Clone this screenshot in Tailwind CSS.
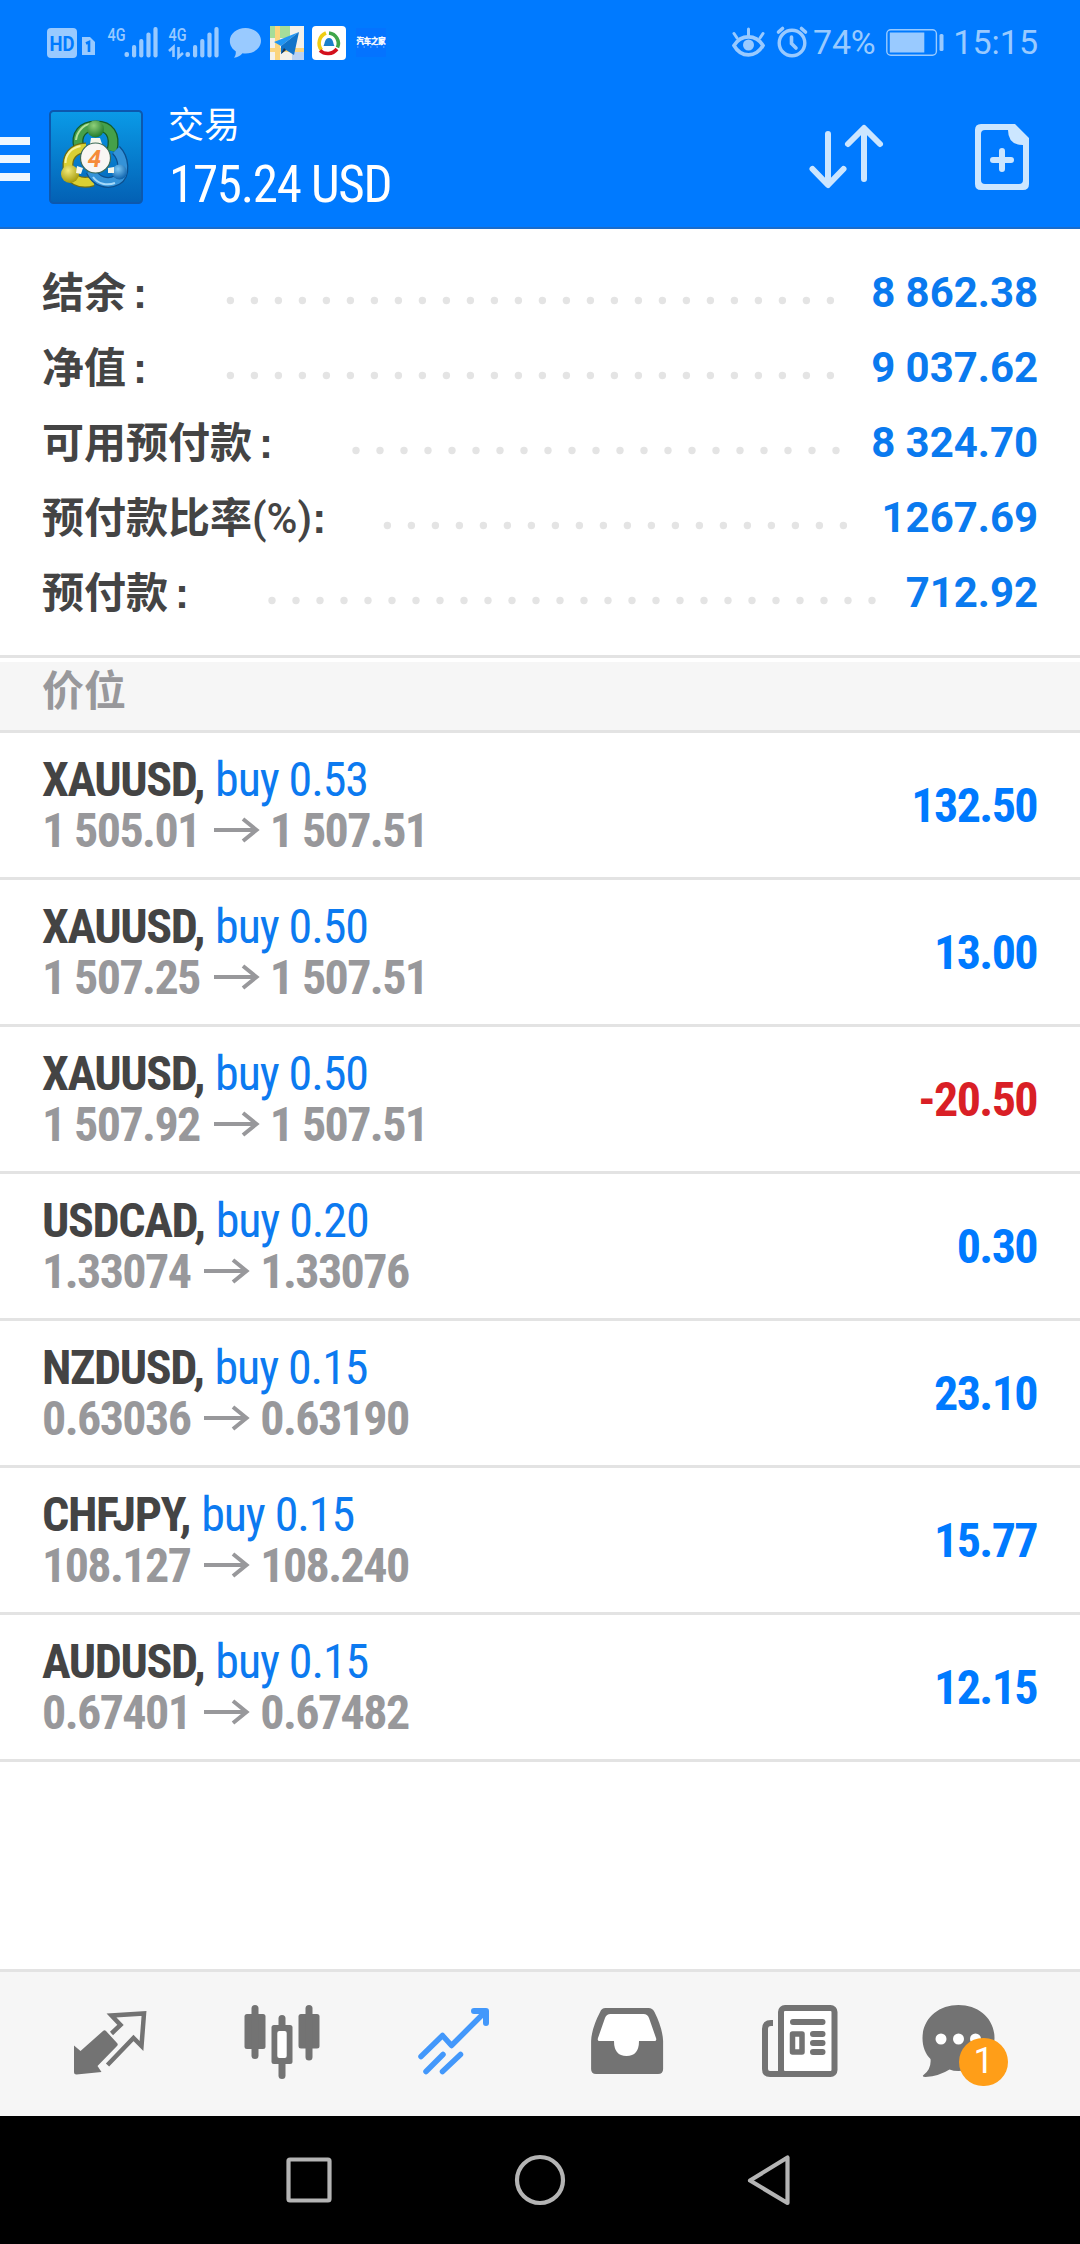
<!DOCTYPE html>
<html lang="zh-CN">
<head>
<meta charset="utf-8">
<title>交易</title>
<script src="https://cdn.jsdelivr.net/npm/@tailwindcss/browser@4"></script>
</head>
<body class="w-[1080px] h-[2244px] flex flex-col overflow-hidden bg-white font-['Roboto','Noto_Sans_CJK_SC',sans-serif] text-[#444]">

<header class="h-[229px] shrink-0 bg-[#007aff] border-b-2 border-[#1a6ccb] flex flex-col">
  <!-- status bar -->
  <div class="h-[84px] flex items-start justify-between text-[#99caff]">
    <svg class="w-[400px] h-[84px]" viewBox="0 0 400 84" fill="currentColor">
      <rect x="47" y="28" width="30" height="30" rx="4"/>
      <text x="62" y="51" text-anchor="middle" textLength="25" lengthAdjust="spacingAndGlyphs" class="font-['Roboto'] font-bold text-[20px] fill-[#007aff]">HD</text>
      <path d="M82 37h8l5 5v13H82z"/>
      <path d="M86 43.5l3-1.5v10" fill="none" stroke="#007aff" stroke-width="2.6"/>
      <text x="107.500" y="41" textLength="18" lengthAdjust="spacingAndGlyphs" class="font-['Roboto'] font-medium text-[19px]">4G</text>
      <g id="bars">
        <rect x="124.500" y="52" width="4.500" height="5" rx="2"/>
        <rect x="132" y="45" width="4.200" height="12.500" rx="2"/>
        <rect x="139.200" y="39" width="4.200" height="18.500" rx="2"/>
        <rect x="146.400" y="32.500" width="4.200" height="25" rx="2"/>
        <rect x="153.400" y="27" width="4.200" height="30.500" rx="2"/>
      </g>
      <text x="168.500" y="41" textLength="18" lengthAdjust="spacingAndGlyphs" class="font-['Roboto'] font-medium text-[19px]">4G</text>
      <use href="#bars" x="61"/>
      <path d="M169 51l4.500-4v10M178.500 47v10l4.500-4" fill="none" stroke="currentColor" stroke-width="2.600"/>
      <path d="M245.500 28c8.800 0 15.500 5.700 15.500 12.700S254.300 53.500 245.500 53.500c-1 0-2 0-3-.3-2 2.400-5 4.300-8.500 4.600 1.600-2 2-4 1.700-6.500-3.500-2.200-5.900-6-5.900-10.500C229.800 33.700 236.700 28 245.500 28z"/>
      <!-- map app -->
      <rect x="270" y="26" width="34" height="34" fill="#f3f1ea"/>
      <path d="M270 26h20v12h-20z" fill="#a5dd9a"/>
      <path d="M292 48h12v12h-12z" fill="#b9d2f4"/>
      <path d="M275 26h5v34h-5zM270 48h34v4h-34z" fill="#fbd57d"/>
      <path d="M299 32l-25 10 7 4z" fill="#2196f3"/>
      <path d="M299 32l-18 14v8l5-4 8 5z" fill="#1173c9"/>
      <path d="M281 54l5-4-2-2z" fill="#22364e"/>
      <!-- ring app -->
      <rect x="312" y="26" width="34" height="34" rx="4" fill="#fff"/>
      <g fill="none" stroke-width="3.600">
        <path d="M321.500 50a11 11 0 0 1 4.500-17" stroke="#efcd12"/>
        <path d="M329 33a10.500 10.500 0 0 1 8.500 14.500" stroke="#3fa64a"/>
        <path d="M320 50.500c5 4.500 12.500 4 17-1.500" stroke="#d3101c"/>
      </g>
      <path d="M323.500 46c1.500-2 1-8 5.500-8s4 6 5.500 8z" fill="#1a7fcb"/>
      <!-- autohome -->
      <rect x="356" y="28" width="30" height="29" fill="#0473ff"/>
      <text x="356.500" y="44" textLength="29" lengthAdjust="spacingAndGlyphs" class="font-['Noto_Sans_CJK_SC'] font-bold text-[7.500px] fill-white stroke-white [stroke-width:0.4px]">汽车之家</text>
      <path d="M357 47h28" stroke="#7db9ff" stroke-width="1" stroke-dasharray="1.500 5"/>
    </svg>
    <div class="flex pt-[22px] pr-[42px]">
      <svg class="w-[84px] h-[40px]" viewBox="730 22 84 40" fill="none" stroke="currentColor" stroke-width="3.600" stroke-linecap="round">
        <path d="M735 45.500C742 34 757 34 764 45.500C757 58 742 58 735 45.500z"/>
        <circle cx="749.500" cy="45" r="5.500" fill="currentColor" stroke="none"/>
        <path d="M749.500 29v6M735 33.500l3 4.500M764 33.500l-3 4.500" stroke-width="3"/>
        <circle cx="793" cy="43" r="12.800" stroke-width="3.400"/>
        <path d="M792.500 37v6.500l4.500 4.500M779.500 32l4-3.500M806.500 32l-4-3.500"/>
      </svg>
      <div class="text-[34px] leading-[40px] tracking-[-0.3px]">74%</div>
      <svg class="w-[74px] h-[40px] ml-1" viewBox="879 22 74 40" fill="currentColor">
        <rect x="886.800" y="29.800" width="49.600" height="25.400" rx="4" fill="none" stroke="currentColor" stroke-width="1.400"/>
        <rect x="889.800" y="32.500" width="34.500" height="20"/>
        <rect x="939.500" y="34" width="4" height="17" rx="1.500"/>
      </svg>
      <div class="text-[34px] leading-[40px]">15:15</div>
    </div>
  </div>
  <!-- app bar -->
  <div class="flex-1 flex justify-between">
    <div class="flex">
      <div class="w-[30px] pt-[53px] flex flex-col gap-2.5">
        <div class="h-2 bg-[#ecf6ff]"></div><div class="h-2 bg-[#ecf6ff]"></div><div class="h-2 bg-[#ecf6ff]"></div>
      </div>
      <svg class="w-[138px] h-[143px]" viewBox="30 84 138 143">
        <defs>
          <linearGradient id="tile" x1="0" y1="0" x2="0" y2="1"><stop offset="0" stop-color="#0a9be8"/><stop offset="1" stop-color="#0360b4"/></linearGradient>
          <radialGradient id="gr" cx=".4" cy=".3" r=".7"><stop offset="0" stop-color="#8fd07a"/><stop offset="1" stop-color="#1f7a2c"/></radialGradient>
          <radialGradient id="ye" cx=".4" cy=".3" r=".7"><stop offset="0" stop-color="#f2ea7a"/><stop offset="1" stop-color="#a59a0c"/></radialGradient>
          <radialGradient id="bl" cx=".4" cy=".3" r=".7"><stop offset="0" stop-color="#7cc8f5"/><stop offset="1" stop-color="#0f63ad"/></radialGradient>
        </defs>
        <rect x="50" y="111" width="92" height="92" rx="3.500" fill="url(#tile)" stroke="#0c58ae" stroke-width="2"/>
        <path d="M79 148c-4-14 4-22 17-22s20 8 16 25" fill="none" stroke="#145c28" stroke-width="11"/>
        <path d="M79 148c-4-14 4-22 17-22s20 8 16 25" fill="none" stroke="#45a04a" stroke-width="8.500"/>
        <path d="M76 140c1-8 7-15 14-16" fill="none" stroke="#b4e09a" stroke-width="2"/>
        <path d="M86 148c-13 0-19 9-18 20s12 17 25 13" fill="none" stroke="#6f6c14" stroke-width="11"/>
        <path d="M86 148c-13 0-19 9-18 20s12 17 25 13" fill="none" stroke="#d9cf33" stroke-width="8.500"/>
        <path d="M65.500 163c0-8 5-15 15-17" fill="none" stroke="#f8f3a0" stroke-width="2"/>
        <path d="M91 171c5 11 17 14 26 9s7-22-1-30" fill="none" stroke="#0c4f8e" stroke-width="11"/>
        <path d="M91 171c5 11 17 14 26 9s7-22-1-30" fill="none" stroke="#3593d8" stroke-width="8.500"/>
        <path d="M93 177c5 7 14 9 22 6" fill="none" stroke="#a5dafa" stroke-width="2"/>
        <circle cx="95.500" cy="129" r="8.500" fill="url(#gr)"/>
        <circle cx="70" cy="174" r="9" fill="url(#ye)"/>
        <circle cx="119.500" cy="172" r="7.500" fill="url(#bl)"/>
        <path d="M91 138h9l2 6H90zM77 166l6 2-2 6-5-1zM108 168l6-1v6h-6z" fill="#f4f6ea"/>
        <circle cx="95.500" cy="158" r="15" fill="#f8f6f4" stroke="#3d6b57" stroke-width="1.200"/>
        <text x="94.500" y="166.500" text-anchor="middle" class="font-['Roboto'] italic font-bold text-[24px] fill-[#f58b3a]">4</text>
      </svg>
      <div class="flex flex-col text-white pt-[16px]">
        <div class="text-[36px] leading-[52px] h-[55px]">交易</div>
        <div class="text-[51px] leading-[60px] font-stretch-condensed tracking-[-1.3px] pl-[1px]">175.24 USD</div>
      </div>
    </div>
    <svg class="w-[280px] h-[143px]" viewBox="800 84 280 143" fill="none" stroke="#cce6ff" stroke-width="6" stroke-linecap="round" stroke-linejoin="round">
      <path d="M828 134v50M812.500 169l15.500 16 15.500-16M864 179v-50M848 144l16-16 16 16"/>
      <path d="M975 130q0-6 6-6h34l14 14v46q0 6-6 6h-42q-6 0-6-6zM985 130q-4 0-4 4v46q0 4 4 4h34q4 0 4-4v-35q-15 0-15-15z" fill="#cce6ff" fill-rule="evenodd" stroke="none"/>
      <path d="M1002 151v18M993 160h18"/>
    </svg>
  </div>
</header>

<main class="flex-1 flex flex-col">
  <section id="summary" class="h-[429px] shrink-0 border-b-[3px] border-[#e3e3e3] pt-[25px] px-[42px]"></section>
  <div class="h-[71px] shrink-0 mt-1 pl-[42px] bg-[#f6f6f6] text-[#98989b] text-[42px] leading-[60px] font-bold border-b-[3px] border-[#e3e3e3]">价位</div>
  <section id="positions"></section>
</main>

<nav class="h-[147px] shrink-0 bg-[#f6f6f6] border-t-[3px] border-[#e3e3e3] pl-[24px] pr-[21px] grid grid-cols-6">
  <svg class="w-full h-[144px]" viewBox="24 1972 172.500 144" fill="#737373">
    <path d="M103 2031q1.500-1.500 3 0l11 12q1.500 1.500 0 3L97.500 2066l4 6-25 2.500q-2.500 0-2.500-2.500V2045.500l6.500 5.500z"/>
    <path d="M111.500 2033.500l9-8.500-9-9.500L144 2013.500 141.500 2046l-8-8L107.500 2065" fill="none" stroke="#737373" stroke-width="4.500"/>
  </svg>
  <svg class="w-full h-[144px]" viewBox="196.500 1972 172.500 144" fill="#737373">
    <rect x="244" y="2014" width="21" height="35" rx="2.500"/><rect x="251" y="2005" width="7" height="54" rx="3.500"/>
    <rect x="298" y="2014" width="21" height="34.500" rx="2.500"/><rect x="305" y="2005" width="7" height="55.500" rx="3.500"/>
    <rect x="278" y="2015" width="7" height="64" rx="3.500"/><rect x="271" y="2025" width="21" height="39" rx="2.500"/>
    <rect x="276.800" y="2031" width="9.400" height="27" rx="2" fill="#fff"/>
  </svg>
  <svg class="w-full h-[144px]" viewBox="369 1972 172.500 144" fill="none" stroke="#4398fb" stroke-width="5.500" stroke-linecap="round" stroke-linejoin="round">
    <path d="M421 2056.500l21.500-21 9 10L485 2012M426 2071.500l17-17M442.500 2071.500l18-17"/>
    <path d="M474 2011h12v12" stroke-width="6"/>
  </svg>
  <svg class="w-full h-[144px]" viewBox="541.500 1972 172.500 144">
    <path d="M605 2008h43q4 0 6 4 8 16 8.600 29v28q0 5-5 5h-62q-5 0-5-5v-28q.6-13 9-29 1.400-4 5.400-4z" fill="#737373"/>
    <path d="M610 2014h33q4 0 5.500 4l7 20q1 3-1.500 3h-15.500q0 15-12.500 15t-12.500-15H599q-2.500 0-1.500-3l7-20q1.500-4 5.500-4z" fill="#fff"/>
  </svg>
  <svg class="w-full h-[144px]" viewBox="714 1972 172.500 144" fill="none" stroke="#737373" stroke-width="6">
    <rect x="781" y="2008" width="53.500" height="66" rx="4" fill="#fff"/>
    <path d="M773 2023h-2q-6 0-6 6v40q0 5 5 5h16M781 2074v-50"/>
    <path d="M793 2022h29.500M813 2034h9.500M813 2043h9.500M813 2052h9.500" stroke-linecap="round"/>
    <path d="M792.500 2034h9.500v18h-9.500z" stroke-width="5.500" stroke-linejoin="round"/>
  </svg>
  <div class="relative">
    <svg class="w-full h-[144px]" viewBox="886.500 1972 172.500 144">
      <path d="M958 2005c20 0 36 13.500 36 33s-16 33-36 33q-5 0-9-1.500-10 6.500-24 7.500-4 0-2-2 8-6 7-16c-5-5-8-12-8-21 0-19.500 16-33 36-33z" fill="#737373"/>
      <g fill="#fff"><circle cx="940.500" cy="2039" r="5.500"/><circle cx="958" cy="2039" r="5.500"/><circle cx="975" cy="2039" r="5.500"/></g>
    </svg>
    <div class="absolute left-[72.500px] top-[66px] w-[49px] h-[48px] rounded-full bg-[#ff9e18] text-white text-[36px] leading-[47px] text-center">1</div>
  </div>
</nav>

<footer class="h-[128px] shrink-0 bg-black">
  <svg class="w-full h-full" viewBox="0 2116 1080 128" fill="none" stroke="#b4b4b4" stroke-width="4.200" stroke-linejoin="round">
    <rect x="288.500" y="2159.500" width="41" height="41" rx="1.500"/>
    <circle cx="540" cy="2180" r="23"/>
    <path d="M787.500 2157.500v45.500L750 2180.500z"/>
  </svg>
</footer>

<script>
  const summary = [
    ['结余', '', '8 862.38', 230.4, 26],
    ['净值', '', '9 037.62', 230.4, 26],
    ['可用预付款', '', '8 324.70', 356, 21],
    ['预付款比率', '(%)', '1267.69', 387.4, 20],
    ['预付款', '', '712.92', 272, 26],
  ];
  document.getElementById('summary').innerHTML = summary.map(([label, unit, value, start, count]) => {
    let dots = '';
    for (let i = 0; i < count; i++) dots += `<circle cx="${start + i * 24}" cy="46.500" r="3.700"/>`;
    return `<div class="relative h-[75px] flex justify-between items-start pt-[10px] text-[42px] leading-[58px]">
      <svg class="absolute -left-[42px] top-0 w-[1080px] h-[75px] fill-[#e4e4e4]" viewBox="0 0 1080 75">${dots}</svg>
      <div class="pt-[1px] font-bold">${label}<span class="font-medium">${unit}</span><span class="font-['Liberation_Sans'] ${unit ? '' : 'ml-[7px]'}">:</span></div>
      <div class="font-bold text-[#0a7aef] -tracking-[0.05px]">${value}</div>
    </div>`;
  }).join('');

  const positions = [
    ['XAUUSD', '0.53', '1 505.01', '1 507.51', '132.50'],
    ['XAUUSD', '0.50', '1 507.25', '1 507.51', '13.00'],
    ['XAUUSD', '0.50', '1 507.92', '1 507.51', '-20.50'],
    ['USDCAD', '0.20', '1.33074', '1.33076', '0.30'],
    ['NZDUSD', '0.15', '0.63036', '0.63190', '23.10'],
    ['CHFJPY', '0.15', '108.127', '108.240', '15.77'],
    ['AUDUSD', '0.15', '0.67401', '0.67482', '12.15'],
  ];
  document.getElementById('positions').innerHTML = positions.map(([symbol, lots, open, now, profit]) => `
    <div class="h-[147px] border-b-[3px] border-[#e3e3e3] pl-[42px] pr-[43px] flex justify-between items-center text-[48px] leading-[51px] font-stretch-condensed">
      <div class="pb-[1px]">
        <div><span class="font-bold tracking-[-1.4px]">${symbol},</span> <span class="text-[#0c7af0] tracking-[-1.1px]">buy ${lots}</span></div>
        <div class="flex items-center font-bold text-[#98989b] tracking-[-1.6px]">
          <span>${open}</span>
          <svg class="w-[46px] h-[26px] ml-[14px] mr-[10px]" viewBox="0 0 46 26" fill="none" stroke="currentColor" stroke-width="4"><path d="M0 13h42M29 2l13.500 11-13.500 11"/></svg>
          <span>${now}</span>
        </div>
      </div>
      <div class="font-bold tracking-[-1.6px] ${profit.startsWith('-') ? 'text-[#d91f26]' : 'text-[#007aff]'}">${profit}</div>
    </div>`).join('');
</script>
</body>
</html>
